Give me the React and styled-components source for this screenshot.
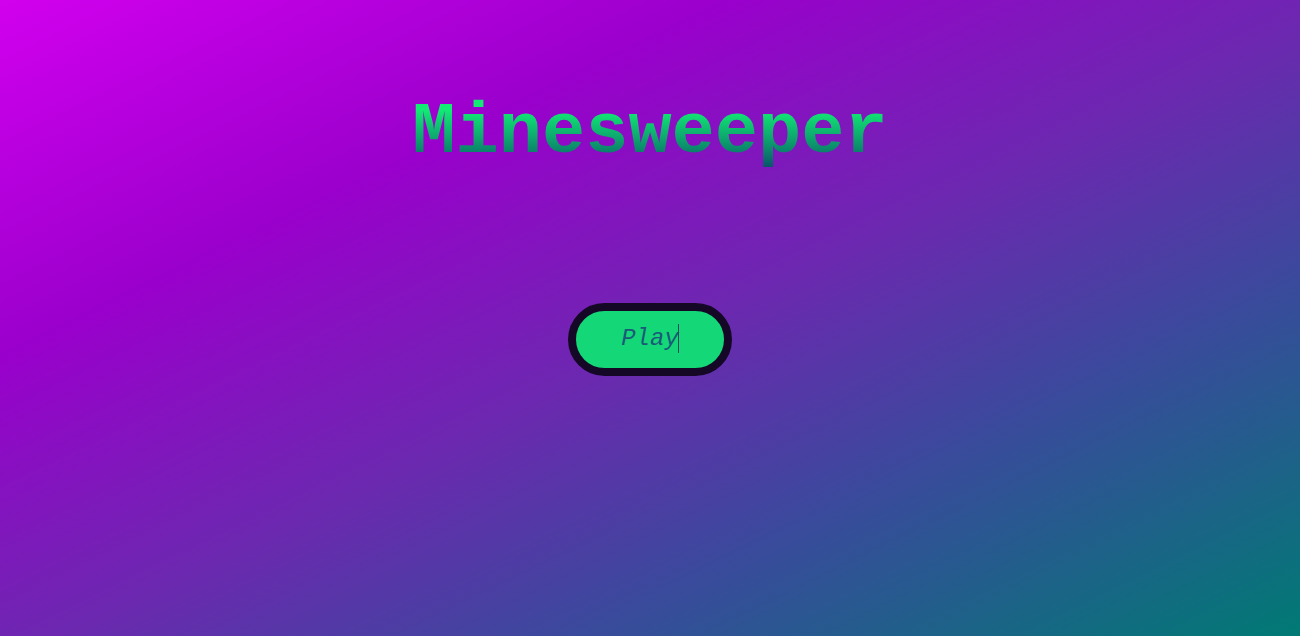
import React from 'react'
import styled, { createGlobalStyle } from 'styled-components'

const GlobalStyle = createGlobalStyle`
  html, body {
    margin: 0;
    padding: 0;
    height: 100%;
  }
  #root {
    height: 100%;
  }
`

const Page = styled.div`
  box-sizing: border-box;
  width: 100%;
  height: 100vh;
  overflow: hidden;
  display: flex;
  flex-direction: column;
  align-items: center;
  padding-top: 91px;
  background: linear-gradient(to bottom right, #d200ee 0%, #9a00cc 28%, #6c28b0 52%, #3a4a9c 72%, #007a74 100%);
  font-family: "Liberation Mono", monospace;
`

const Title = styled.h1`
  margin: 0;
  font-size: 72px;
  line-height: 84px;
  font-weight: bold;
  background: linear-gradient(to bottom, #12ec74 22%, #0b8c6c 68%, #0a3c6c 100%);
  -webkit-background-clip: text;
  background-clip: text;
  color: transparent;
`

const PlayButton = styled.button`
  margin-top: 128px;
  box-sizing: border-box;
  width: 164px;
  height: 73px;
  border: 8px solid #150826;
  border-radius: 37px;
  background: #14d877;
  color: #1b5a78;
  font-family: "Liberation Mono", monospace;
  font-style: italic;
  font-size: 24px;
  display: flex;
  align-items: center;
  justify-content: center;
  cursor: pointer;
  padding: 0 0 2px;
`

const Caret = styled.span`
  display: inline-block;
  width: 0;
  height: 29px;
  border-left: 1px solid #1b4a60;
  margin-left: -1px;
`

export default function App() {
  return (
    <>
      <GlobalStyle />
      <Page>
        <Title>Minesweeper</Title>
        <PlayButton>
          Play<Caret />
        </PlayButton>
      </Page>
    </>
  )
}
